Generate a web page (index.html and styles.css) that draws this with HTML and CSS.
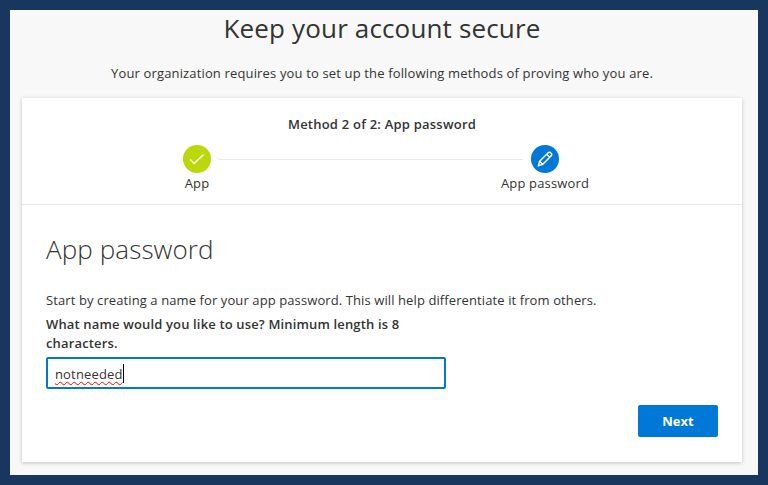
FILE: index.html
```html
<!DOCTYPE html>
<html lang="en">

<head>
    <meta charset="UTF-8">
    <meta name="viewport" content="width=device-width, initial-scale=1.0">
    <title>Keep your account secure</title>
    <link rel="stylesheet" href="styles.css">
</head>

<body>
    <main class="page">
        <h1>Keep your account secure</h1>
        <p class="subtitle">Your organization requires you to set up the following methods of proving who you are.</p>

        <div class="card">
            <div class="progress">
                <div class="method">Method 2 of 2: App password</div>
                <div class="steps">
                    <div class="step">
                        <svg class="step-icon done" viewBox="0 0 28 28">
                            <path d="M7.2 14.4l4 4 9.4-9" />
                        </svg>
                        <span class="step-name">App</span>
                    </div>
                    <div class="line"></div>
                    <div class="step">
                        <svg class="step-icon current" viewBox="0 0 28 28">
                            <path d="M7.4 20.6l1.3-4.4 8.2-8.2a2.1 2.1 0 0 1 3.1 3.1l-8.2 8.2zM8.7 16.2l3.1 3.1M15.7 9.2l3.1 3.1" />
                        </svg>
                        <span class="step-name">App password</span>
                    </div>
                </div>
            </div>

            <div class="content">
                <h2>App password</h2>
                <p class="intro">Start by creating a name for your app password. This will help differentiate it from others.</p>
                <div class="label" id="nameLabel">What name would you like to use? Minimum length is 8 characters.</div>
                <div class="field" role="textbox" aria-labelledby="nameLabel" contenteditable="true" spellcheck="false"><span class="value">notneeded</span></div>
                <div class="buttons">
                    <button type="button">Next</button>
                </div>
            </div>
        </div>
    </main>
</body>

</html>
```

FILE: styles.css
```css
* {
    box-sizing: border-box;
}

body {
    margin: 0;
    padding: 10px;
    height: 485px;
    background-color: #18365e;
    color: #333;
    font-family: "Segoe UI", "Open Sans", "Noto Sans", sans-serif;
    font-size: 13px;
    letter-spacing: 0.15px;
    line-height: 19px;
}

.page {
    height: 465px;
    width: 748px;
    padding: 0 16px 0 12px;
    background-color: #f8f8f8;
}

h1 {
    margin: 0;
    font-size: 26px;
    font-weight: 400;
    line-height: 36px;
    text-align: center;
}

.subtitle {
    margin: 18px 0 15px;
    text-align: center;
}

.card {
    height: 364px;
    background-color: #fff;
    box-shadow: 0 1px 4px rgba(0, 0, 0, 0.22);
}

.progress {
    height: 107px;
    padding-top: 17px;
    border-bottom: 1px solid #e6e6e6;
}

.method {
    font-weight: 600;
    letter-spacing: 0.22px;
    text-align: center;
}

.steps {
    display: flex;
    justify-content: center;
    margin-top: 11px;
    padding-right: 22px;
}

.step {
    display: flex;
    flex-direction: column;
    align-items: center;
    width: 44px;
}

.step-name {
    white-space: nowrap;
    margin-top: 1px;
}

.step-icon {
    width: 28px;
    height: 28px;
    border-radius: 50%;
    fill: none;
    stroke: #fff;
    stroke-width: 1.4;
}

.done {
    background-color: #bad80a;
}

.current {
    background-color: #0078d7;
}

.line {
    width: 304px;
    height: 1px;
    margin-top: 14px;
    background-color: #eaeaea;
}

.content {
    padding: 26px 24px 0;
}

h2 {
    margin: 0;
    font-size: 26px;
    font-weight: 300;
    line-height: 36px;
    letter-spacing: 0.1px;
}

.intro {
    margin: 24px 0 5px;
    letter-spacing: 0.1px;
}

.label {
    width: 370px;
    font-weight: 600;
}

.field {
    width: 400px;
    height: 32px;
    margin-top: 4px;
    padding: 5px 7px;
    border: 2px solid #0078d7;
    border-radius: 2px;
    line-height: 20px;
    outline: none;
}

.value {
    display: inline-block;
    height: 19px;
    border-right: 1px solid #000;
    text-decoration: underline wavy #f00 1.2px;
    text-underline-offset: 2px;
    text-decoration-skip-ink: none;
}

.buttons {
    display: flex;
    justify-content: flex-end;
    margin-top: 16px;
}

button {
    width: 80px;
    height: 32px;
    padding: 0;
    border: none;
    border-radius: 2px;
    background-color: #0078d7;
    color: #fff;
    font-family: inherit;
    font-size: 13px;
    font-weight: 700;
    cursor: pointer;
}
```
